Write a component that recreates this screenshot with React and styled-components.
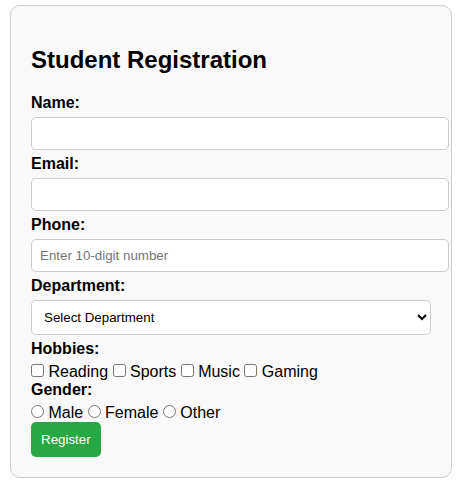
import React from 'react'
import styled, { createGlobalStyle } from 'styled-components';

const GlobalStyle = createGlobalStyle`
body {
  margin: 0;
  background: #fff;
  font-family: "Liberation Sans", Arial, sans-serif;
  color: #000;
}
`

const Card = styled.form`
max-width: 400px;
margin: 5px 10px;
padding: 20px;
border: 1px solid #ccc;
border-radius: 10px;
background: #f9f9f9;
`

const Title = styled.h2`
font-size: 24px;
font-weight: bold;
margin: 19.92px 0;
`

const FieldLabel = styled.label`
display: block;
font-size: 16px;
font-weight: bold;
margin-bottom: 5px;
`

const TextInput = styled.input`
display: block;
width: 100%;
padding: 8px;
margin: 0 0 5px;
border: 1px solid #ccc;
border-radius: 5px;
background: #fff;
font-family: "Liberation Sans", Arial, sans-serif;
font-size: 13.333px;
outline: none;

&::placeholder {
  color: #757575;
}
`

const Select = styled.select`
display: block;
width: 100%;
padding: 8px;
margin: 0 0 5px;
border: 1px solid #ccc;
border-radius: 5px;
background: #fff;
color: #000;
font-family: "Liberation Sans", Arial, sans-serif;
font-size: 13.333px;
`

const Options = styled.div`
font-size: 16px;
line-height: 18px;
`

const Pick = styled.input`
margin: 0;
width: 13px;
height: 13px;
vertical-align: baseline;
`

const Button = styled.button`
display: inline-block;
padding: 10px;
border: none;
border-radius: 5px;
background: #28a745;
color: #fff;
font-family: "Liberation Sans", Arial, sans-serif;
font-size: 13.333px;
`

const hobbies = ['Reading', 'Sports', 'Music', 'Gaming']
const genders = ['Male', 'Female', 'Other']

const App = () => {
    return (
        <>
            <GlobalStyle />
            <Card onSubmit={e => e.preventDefault()}>
                <Title>Student Registration</Title>

                <FieldLabel>Name:</FieldLabel>
                <TextInput type="text" />

                <FieldLabel>Email:</FieldLabel>
                <TextInput type="email" />

                <FieldLabel>Phone:</FieldLabel>
                <TextInput type="text" placeholder="Enter 10-digit number" />

                <FieldLabel>Department:</FieldLabel>
                <Select defaultValue="">
                    <option value="">Select Department</option>
                    <option>Computer Science</option>
                    <option>Electronics</option>
                    <option>Mechanical</option>
                </Select>

                <FieldLabel>Hobbies:</FieldLabel>
                <Options>
                    {hobbies.map((h, i) => (
                        <React.Fragment key={h}>
                            {i > 0 && ' '}
                            <Pick type="checkbox" /> {h}
                        </React.Fragment>
                    ))}
                </Options>

                <FieldLabel>Gender:</FieldLabel>
                <Options>
                    {genders.map((g, i) => (
                        <React.Fragment key={g}>
                            {i > 0 && ' '}
                            <Pick type="radio" name="gender" /> {g}
                        </React.Fragment>
                    ))}
                </Options>

                <Button type="submit">Register</Button>
            </Card>
        </>
    );
};

export default App;
